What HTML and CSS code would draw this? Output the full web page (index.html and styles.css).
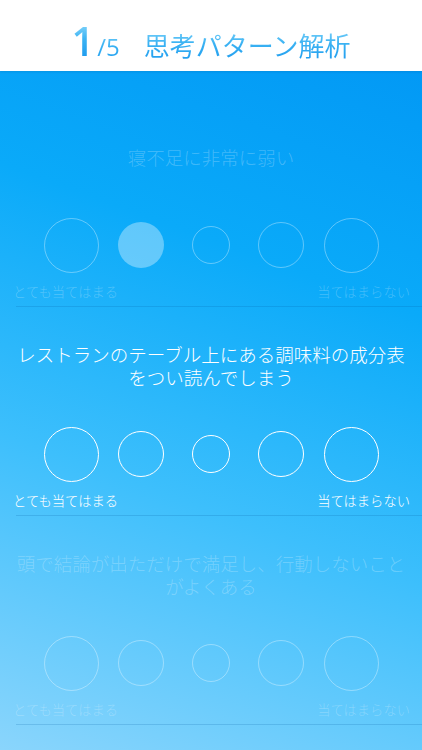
FILE: index.html
```html
<!DOCTYPE html>
<html lang="ja">
<head>
<meta charset="utf-8">
<title>思考パターン解析</title>
<link rel="stylesheet" href="styles.css">
</head>
<body>
<header class="header">
  <div class="title">
    <span class="num">1</span><span class="den">/5</span><span class="name">思考パターン解析</span>
  </div>
</header>
<main class="main">
  <section class="item faded">
    <div class="question">寝不足に非常に弱い</div>
    <div class="scale">
      <div class="cell"><span class="dot d1"></span></div>
      <div class="cell"><span class="dot d2 filled"></span></div>
      <div class="cell"><span class="dot d3"></span></div>
      <div class="cell"><span class="dot d2"></span></div>
      <div class="cell"><span class="dot d1"></span></div>
    </div>
    <div class="labels"><span>とても当てはまる</span><span>当てはまらない</span></div>
  </section>
  <section class="item">
    <div class="question"><span class="qline">レストランのテーブル上にある調味料の成分表</span><span class="qline">をつい読んでしまう</span></div>
    <div class="scale">
      <div class="cell"><span class="dot d1"></span></div>
      <div class="cell"><span class="dot d2"></span></div>
      <div class="cell"><span class="dot d3"></span></div>
      <div class="cell"><span class="dot d2"></span></div>
      <div class="cell"><span class="dot d1"></span></div>
    </div>
    <div class="labels"><span>とても当てはまる</span><span>当てはまらない</span></div>
  </section>
  <section class="item faded">
    <div class="question"><span class="qline">頭で結論が出ただけで満足し、行動しないこと</span><span class="qline">がよくある</span></div>
    <div class="scale">
      <div class="cell"><span class="dot d1"></span></div>
      <div class="cell"><span class="dot d2"></span></div>
      <div class="cell"><span class="dot d3"></span></div>
      <div class="cell"><span class="dot d2"></span></div>
      <div class="cell"><span class="dot d1"></span></div>
    </div>
    <div class="labels"><span>とても当てはまる</span><span>当てはまらない</span></div>
  </section>
</main>
</body>
</html>
```
FILE: styles.css
```css
html, body {
  margin: 0;
  padding: 0;
}
body {
  width: 422px;
  height: 750px;
  overflow: hidden;
  font-family: "Noto Sans CJK JP", "Noto Sans", sans-serif;
  background: linear-gradient(200deg, #0094f4 0%, #0aaaf9 35%, #3dbffc 65%, #8ad5fc 100%);
}
.header {
  height: 71px;
  background: #ffffff;
  box-shadow: 0 1px 2px rgba(0, 60, 120, 0.15);
  display: flex;
  justify-content: center;
  align-items: center;
  padding-top: 16px;
  box-sizing: border-box;
  position: relative;
  z-index: 1;
}
.title {
  display: flex;
  align-items: baseline;
}
.title span {
  background: linear-gradient(to bottom, #8edafb 0%, #3cb3f3 45%, #1897ee 100%);
  -webkit-background-clip: text;
  background-clip: text;
  color: transparent;
}
.num {
  font-family: "Open Sans", sans-serif;
  font-size: 40px;
  font-weight: 600;
  line-height: 40px;
}
.den {
  font-family: "Open Sans", sans-serif;
  font-size: 24px;
  font-weight: 400;
  line-height: 40px;
  margin-left: 3px;
}
.name {
  font-family: "Noto Sans CJK JP", sans-serif;
  font-size: 26px;
  font-weight: 400;
  line-height: 40px;
  margin-left: 24px;
}
.main {
  padding-top: 27px;
}
.item {
  height: 209px;
  box-sizing: border-box;
  border-bottom: 1px solid rgba(0, 90, 160, 0.18);
  margin-left: 16px;
  display: flex;
  flex-direction: column;
}
.question {
  height: 118px;
  margin-left: -16px;
  display: flex;
  flex-direction: column;
  align-items: center;
  justify-content: center;
  text-align: center;
  color: #ffffff;
  font-size: 18.5px;
  line-height: 23px;
  font-weight: 300;
}
.qline {
  display: block;
  height: 23px;
  line-height: 23px;
}
.scale {
  height: 58px;
  margin-left: -16px;
  display: flex;
  justify-content: center;
  align-items: center;
}
.cell {
  width: 70px;
  display: flex;
  justify-content: center;
  align-items: center;
}
.dot {
  display: block;
  border-radius: 50%;
  box-sizing: border-box;
  border: 1.7px solid #ffffff;
}
.d1 { width: 55px; height: 55px; }
.d2 { width: 46px; height: 46px; }
.d3 { width: 38px; height: 38px; }
.labels {
  margin-top: 10px;
  margin-left: -3px;
  margin-right: 12px;
  display: flex;
  justify-content: space-between;
  color: #ffffff;
  font-size: 13.3px;
  line-height: 16px;
  font-weight: 300;
}
.faded .question,
.faded .labels {
  color: rgba(255, 255, 255, 0.24);
}
.faded .dot {
  border-color: rgba(255, 255, 255, 0.35);
  border-width: 1.3px;
}
.faded .dot.filled {
  border: none;
  background: rgba(255, 255, 255, 0.35);
}
```
